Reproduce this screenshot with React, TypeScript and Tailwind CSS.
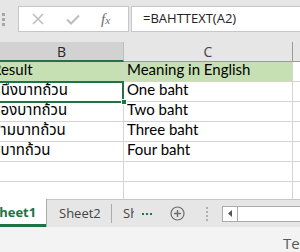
import React from "react";

const rows = [
  { b: "Result", c: "Meaning in English", head: true },
  { b: "หนึ่งบาทถ้วน", c: "One baht" },
  { b: "สองบาทถ้วน", c: "Two baht" },
  { b: "สามบาทถ้วน", c: "Three baht" },
  { b: "สี่บาทถ้วน", c: "Four baht" },
  { b: "", c: "" },
];

const cellFont = "font-['Lato','Noto_Sans_Thai','Tahoma',sans-serif] text-[15px] text-black";

function FormulaBar() {
  return (
    <div className="h-[42px] bg-[#e6e6e6] flex items-start pt-[6px]">
      <div className="w-[18px] h-[26px] flex flex-col items-center justify-center gap-[2px] pr-[12px]">
        <span className="w-[3px] h-[3px] bg-[#a6a6a6]" />
        <span className="w-[3px] h-[3px] bg-[#a6a6a6]" />
        <span className="w-[3px] h-[3px] bg-[#a6a6a6]" />
      </div>
      <div className="w-[111px] h-[26px] bg-white border border-[#c6c6c6] flex items-center">
        <svg width="12" height="12" viewBox="0 0 12 12" className="ml-[13px]">
          <path d="M1 1 L11 11 M11 1 L1 11" stroke="#bdbdbd" strokeWidth="1.5" />
        </svg>
        <svg width="14" height="11" viewBox="0 0 14 11" className="ml-[22px]">
          <path d="M1 5.5 L5 9.5 L13 1.5" stroke="#bdbdbd" strokeWidth="2" fill="none" />
        </svg>
        <span className="ml-[21px] font-['Liberation_Serif',serif] italic text-[15px] text-[#6b6b6b] leading-none">
          f<span className="text-[11px]">x</span>
        </span>
      </div>
      <div className="ml-[2px] flex-1 h-[26px] bg-white border border-r-0 border-[#c6c6c6] flex items-center pl-[11px] font-['Open_Sans',sans-serif] text-[13px] text-[#222]">
        =BAHTTEXT(A2)
      </div>
    </div>
  );
}

function ColumnHeaders() {
  return (
    <div className="h-[20px] flex bg-[#e6e6e6] font-['Open_Sans',sans-serif] text-[14px]">
      <div className="w-[124px] h-full bg-[#d2d2d2] border-r border-[#bdbdbd] border-b-2 border-b-[#217346] flex items-center justify-center text-[#262626]">
        B
      </div>
      <div className="w-[169px] h-full border-r border-[#9b9b9b] border-b border-b-[#9b9b9b] flex items-center justify-center text-[#444]">
        C
      </div>
      <div className="flex-1 h-full border-b border-[#9b9b9b]" />
    </div>
  );
}

function Grid() {
  return (
    <div className="relative h-[137px] overflow-hidden">
      {rows.map((r, i) => (
        <div key={i} className={`h-[20px] flex ${cellFont}`}>
          <div
            className={`w-[134px] -ml-[10px] h-full border-r border-b border-[#d4d4d4] pl-[2px] flex items-end pb-[1px] whitespace-nowrap overflow-hidden ${r.head ? "bg-[#c6e0b4]" : ""}`}
          >
            {r.b}
          </div>
          <div
            className={`w-[169px] h-full border-r border-b border-[#d4d4d4] pl-[3px] flex items-end pb-[1px] whitespace-nowrap overflow-hidden ${r.head ? "bg-[#c6e0b4]" : ""}`}
          >
            {r.c}
          </div>
          <div className="flex-1 h-full border-b border-[#d4d4d4]" />
        </div>
      ))}
      <div className="h-[20px] flex">
        <div className="w-[124px] h-full border-r border-[#d4d4d4]" />
        <div className="w-[169px] h-full border-r border-[#d4d4d4]" />
      </div>
      {/* active cell B2 */}
      <div className="absolute left-[-4px] top-[19px] w-[128px] h-[22px] border-2 border-[#217346]" />
      <div className="absolute left-[121px] top-[37px] w-[6px] h-[6px] bg-[#217346] border border-white" />
    </div>
  );
}

function SheetTabs() {
  return (
    <div className="h-[28px] flex bg-[#e6e6e6] border-t border-[#c6c6c6] font-['Open_Sans',sans-serif] text-[13px]">
      <div className="w-[47px] h-[28px] -mt-px bg-white border-r border-[#ababab] overflow-hidden flex items-center">
        <div className="h-full flex items-center border-b-[3px] border-[#217346] -ml-[8px] pr-[10px] pt-[2px]">
          <span className="font-bold text-[#217346] whitespace-nowrap">Sheet1</span>
        </div>
      </div>
      <div className="w-[65px] flex items-center border-r border-[#ababab] self-center h-[19px] pl-[12px] text-[#444]">
        Sheet2
      </div>
      <div className="w-[11px]" />
      <div className="w-[11px] overflow-hidden whitespace-nowrap flex items-center text-[#444]">Sheet3</div>
      <div className="ml-[8px] flex items-center gap-[2px]">
        <span className="w-[2px] h-[2px] bg-[#217346]" />
        <span className="w-[2px] h-[2px] bg-[#217346]" />
        <span className="w-[2px] h-[2px] bg-[#217346]" />
      </div>
      <div className="ml-[18px] flex items-center">
        <svg width="15" height="15" viewBox="0 0 15 15">
          <circle cx="7.5" cy="7.5" r="6.5" stroke="#6d6d6d" strokeWidth="1.2" fill="none" />
          <path d="M7.5 4 V11 M4 7.5 H11" stroke="#6d6d6d" strokeWidth="1.4" />
        </svg>
      </div>
      <div className="ml-[21px] flex flex-col justify-center gap-[2px]">
        <span className="w-[2px] h-[2px] bg-[#b0b0b0]" />
        <span className="w-[2px] h-[2px] bg-[#b0b0b0]" />
        <span className="w-[2px] h-[2px] bg-[#b0b0b0]" />
        <span className="w-[2px] h-[2px] bg-[#b0b0b0]" />
      </div>
      <div className="ml-[14px] flex-1 self-center h-[16px] bg-white border border-r-0 border-[#ababab] flex">
        <div className="w-[15px] h-full border-r border-[#ababab] flex items-center justify-center">
          <svg width="4" height="7" viewBox="0 0 4 7">
            <path d="M4 0 V7 L0 3.5 Z" fill="#555" />
          </svg>
        </div>
      </div>
    </div>
  );
}

export default function App() {
  return (
    <div className="w-[300px] h-[252px] overflow-hidden bg-white flex flex-col">
      <FormulaBar />
      <ColumnHeaders />
      <Grid />
      <SheetTabs />
      <div className="flex-1 bg-[#f3f3f3] pl-[283px] pt-[5px] font-['Open_Sans',sans-serif] text-[15px] text-[#595959] whitespace-nowrap overflow-hidden">
        Text
      </div>
    </div>
  );
}
